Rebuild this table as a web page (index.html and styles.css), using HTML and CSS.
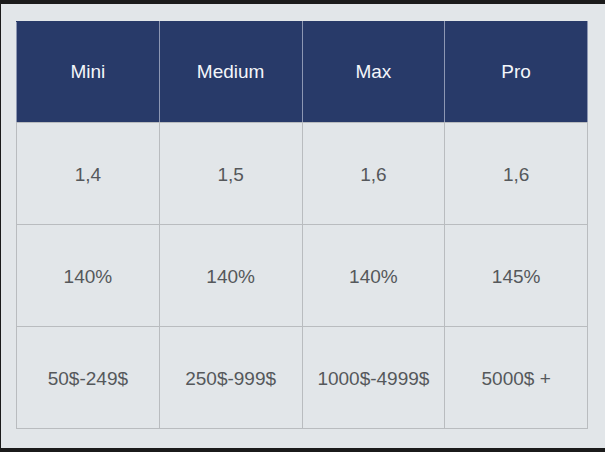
FILE: index.html
```html
<!DOCTYPE html>
<html>
<head>
<meta charset="utf-8">
<link rel="stylesheet" href="styles.css">
</head>
<body>
<div class="frame">
  <table class="plans">
    <thead>
      <tr><th>Mini</th><th>Medium</th><th>Max</th><th>Pro</th></tr>
    </thead>
    <tbody>
      <tr><td>1,4</td><td>1,5</td><td>1,6</td><td>1,6</td></tr>
      <tr><td>140%</td><td>140%</td><td>140%</td><td>145%</td></tr>
      <tr><td>50$-249$</td><td>250$-999$</td><td>1000$-4999$</td><td>5000$ +</td></tr>
    </tbody>
  </table>
</div>
</body>
</html>
```
FILE: styles.css
```css
html, body {
  margin: 0;
  padding: 0;
  background: #1b1b1b;
  width: 605px;
  height: 452px;
  overflow: hidden;
}
.frame {
  margin: 4px 0 0 1px;
  height: 444px;
  background: #e2e6e9;
  padding: 17px 0 0 15px;
  box-sizing: border-box;
}
.plans {
  border-collapse: collapse;
  font-family: "Liberation Sans", Arial, sans-serif;
  font-size: 19px;
  table-layout: fixed;
  width: 572px;
}
.plans th, .plans td {
  border: 1px solid #b9bcbf;
  padding: 0;
  text-align: center;
  vertical-align: middle;
  box-sizing: border-box;
}
.plans th {
  height: 101px;
  background: #283a69;
  color: #f4f6fa;
  font-weight: normal;
  border-color: #283a69 #8d97b3 #b9bcbf #8d97b3;
}
.plans td {
  height: 102px;
  padding-top: 2px;
  color: #55585b;
}
```
